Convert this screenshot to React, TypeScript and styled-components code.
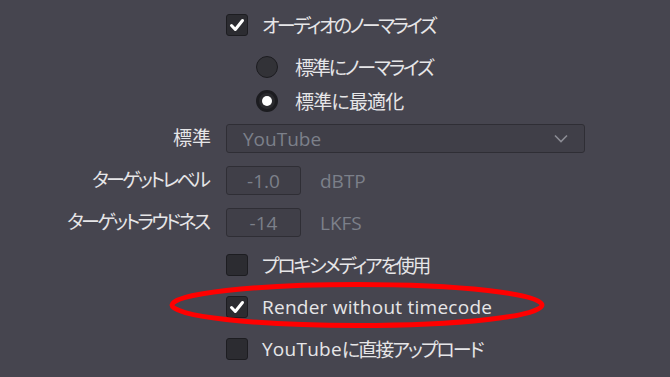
import React from 'react';
import styled, { createGlobalStyle } from 'styled-components';

const GlobalStyle = createGlobalStyle`
    html, body {
        margin: 0;
        padding: 0;
        background: #46454f;
    }
`

const Page = styled.div`
    position: relative;
    width: 670px;
    height: 377px;
    overflow: hidden;
    background: #46454f;
    padding-top: 10px;
    box-sizing: border-box;
    font-family: "Open Sans", "Noto Sans CJK JP", sans-serif;
    font-size: 19px;
    font-feature-settings: "palt";
    color: #e6e6e8;
`

const Row = styled.div<{ $mt?: number }>`
    display: grid;
    grid-template-columns: 211px 1fr;
    column-gap: 15px;
    align-items: center;
    height: 29px;
    margin-top: ${p => p.$mt ?? 13}px;
`

const Label = styled.div`
    text-align: right;
    white-space: nowrap;
    line-height: 29px;
`

// kana in the original UI font are narrower than in Noto, so tighten them per text
const Jp = styled.span<{ $ls: number }>`
    letter-spacing: ${p => p.$ls}px;
    margin-right: ${p => -p.$ls}px;
`

const Control = styled.div<{ $indent?: number }>`
    display: flex;
    align-items: center;
    padding-left: ${p => p.$indent ?? 0}px;
    white-space: nowrap;
`

const Latin = styled.span`
    letter-spacing: 0.25px;
`

const Box = styled.span`
    display: flex;
    align-items: center;
    justify-content: center;
    width: 22px;
    height: 22px;
    box-sizing: border-box;
    border: 1px solid #1d1d21;
    border-radius: 3px;
    background: #2c2c31;
    margin-right: 14px;
    flex-shrink: 0;
`

const Radio = styled.span<{ $on?: boolean }>`
    display: flex;
    align-items: center;
    justify-content: center;
    width: 22px;
    height: 22px;
    box-sizing: border-box;
    border-radius: 50%;
    border: ${p => (p.$on ? '3px solid #1c1c20' : '1px solid #1c1c20')};
    background: ${p => (p.$on ? '#2a2a2e' : '#323237')};
    margin-right: 17px;
    flex-shrink: 0;
    &::after {
        content: '';
        display: ${p => (p.$on ? 'block' : 'none')};
        width: 10px;
        height: 10px;
        border-radius: 50%;
        background: #fff;
    }
`

const Field = styled.div<{ $w: number; $center?: boolean }>`
    display: flex;
    align-items: center;
    justify-content: ${p => (p.$center ? 'center' : 'space-between')};
    width: ${p => p.$w}px;
    height: 29px;
    box-sizing: border-box;
    padding: 0 16px;
    border: 1px solid #2f2e35;
    border-radius: 3px;
    background: #403f48;
    color: #7c808a;
`

const Unit = styled.span`
    margin-left: 19px;
    color: #7c808a;
`

const Circle = styled.svg`
    position: absolute;
    left: 0;
    top: 0;
    pointer-events: none;
`

const Check = () => (
    <svg width="16" height="16" viewBox="0 0 16 16">
        <path d="M2.5 8.5 L6.3 12.5 L13.5 3.5" fill="none" stroke="#fff" strokeWidth="3" strokeLinecap="round" strokeLinejoin="round" />
    </svg>
)

const CheckRow = ({ on, children, mt }: { on?: boolean; children: React.ReactNode; mt?: number }) => (
    <Row $mt={mt}>
        <span />
        <Control>
            <Box>{on && <Check />}</Box>
            {children}
        </Control>
    </Row>
)

export default function App() {
    return (
        <>
            <GlobalStyle />
            <Page>
                <CheckRow on mt={0}>
                    <Jp $ls={-2.6}>オーディオのノーマライズ</Jp>
                </CheckRow>
                <Row $mt={13}>
                    <span />
                    <Control $indent={30}>
                        <Radio />
                        <Jp $ls={-2.2}>標準にノーマライズ</Jp>
                    </Control>
                </Row>
                <Row $mt={5}>
                    <span />
                    <Control $indent={30}>
                        <Radio $on />
                        <Jp $ls={-0.8}>標準に最適化</Jp>
                    </Control>
                </Row>
                <Row $mt={9}>
                    <Label><Jp $ls={0}>標準</Jp></Label>
                    <Control>
                        <Field $w={359}>
                            <span>YouTube</span>
                            <svg width="14" height="9" viewBox="0 0 14 9">
                                <path d="M1 1.5 L7 7.5 L13 1.5" fill="none" stroke="#8b8c94" strokeWidth="1.6" />
                            </svg>
                        </Field>
                    </Control>
                </Row>
                <Row>
                    <Label><Jp $ls={-2.6}>ターゲットレベル</Jp></Label>
                    <Control>
                        <Field $w={75} $center>-1.0</Field>
                        <Unit>dBTP</Unit>
                    </Control>
                </Row>
                <Row>
                    <Label><Jp $ls={-2.6}>ターゲットラウドネス</Jp></Label>
                    <Control>
                        <Field $w={75} $center>-14</Field>
                        <Unit>LKFS</Unit>
                    </Control>
                </Row>
                <CheckRow>
                    <Jp $ls={-2.3}>プロキシメディアを使用</Jp>
                </CheckRow>
                <CheckRow on>
                    <Latin>Render without timecode</Latin>
                </CheckRow>
                <CheckRow>
                    <Latin>YouTube</Latin>
                    <Jp $ls={-2}>に直接アップロード</Jp>
                </CheckRow>
                <Circle width="670" height="377">
                    <ellipse cx="357" cy="305" rx="185" ry="20.5" fill="none" stroke="#ff0000" strokeWidth="5" />
                </Circle>
            </Page>
        </>
    );
}
